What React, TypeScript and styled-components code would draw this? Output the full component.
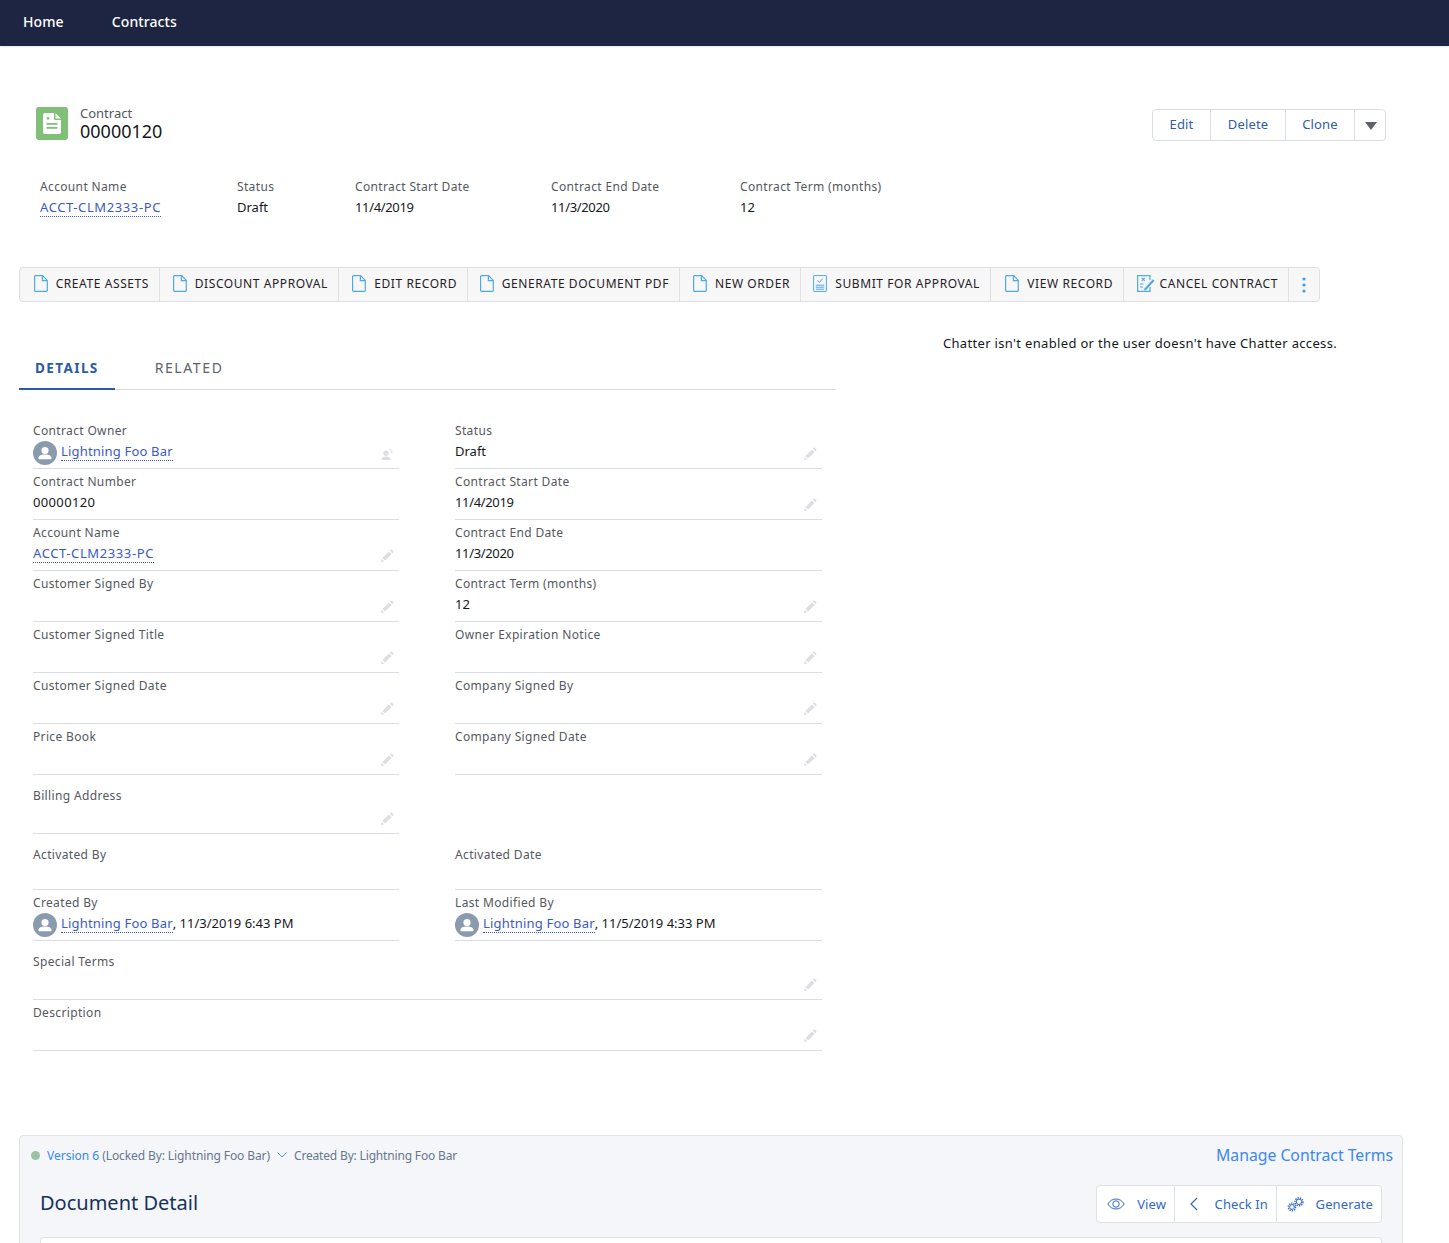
import React from "react";
import styled, { createGlobalStyle } from "styled-components";

const Global = createGlobalStyle`
  html, body { margin: 0; padding: 0; height: 1243px; overflow: hidden; background: #fff; }
  body { font-family: "Noto Sans", "Open Sans", sans-serif; color: #16325c; }
  * { box-sizing: border-box; }
`;

const Page = styled.div`
  width: 1449px;
  height: 1243px;
  overflow: hidden;
`;
const Nav = styled.nav`
  height: 46px;
  background: #1d2542;
  display: flex;
  align-items: center;
  padding: 0 23px 3px;
  gap: 48px;
  box-shadow: 0 1px 2px rgba(0, 0, 0, 0.1);
`;
const NavItem = styled.a`
  color: #fff;
  font-size: 14px;
  font-weight: 500;
  letter-spacing: 0.1px;
`;
const Highlights = styled.header`
  padding: 60px 63px 0 36px;
  height: 221px;
`;
const TitleRow = styled.div`
  display: flex;
  justify-content: space-between;
  align-items: flex-start;
`;
const TitleBlock = styled.div`
  display: flex;
  gap: 12px;
  align-items: flex-start;
`;
const TitleIcon = styled.span`
  width: 32px;
  height: 33px;
  margin-top: 1px;
  border-radius: 3px;
  background: #7fbf76;
  display: flex;
  align-items: center;
  justify-content: center;
`;
const TitleText = styled.div`
  display: flex;
  flex-direction: column;
  margin-top: -1px;
`;
const Eyebrow = styled.span`
  font-size: 13px;
  line-height: 16px;
  color: #54585e;
`;
const RecordNumber = styled.span`
  font-size: 18px;
  line-height: 20px;
  color: #16181c;
`;
const ButtonGroup = styled.div`
  display: flex;
  background: #fff;
  border: 1px solid #d8dde6;
  border-radius: 4px;
  margin-top: 3px;
  height: 32px;
`;
const GroupButton = styled.button<{ $w: number }>`
  width: ${(p) => p.$w}px;
  border: 0;
  background: none;
  padding: 0 0 2px;
  font: inherit;
  font-size: 13px;
  letter-spacing: 0.15px;
  color: #2f5da8;
  display: flex;
  align-items: center;
  justify-content: center;
  & + & {
    border-left: 1px solid #d8dde6;
  }
`;
const Caret = styled.span`
  display: flex;
  margin: 4px 0 0 2px;
`;
const Facts = styled.div`
  display: flex;
  margin-top: 38px;
  padding-left: 4px;
`;
const Fact = styled.div<{ $w: number }>`
  width: ${(p) => p.$w}px;
  display: flex;
  flex-direction: column;
`;
const FactLabel = styled.span`
  font-size: 12px;
  line-height: 16px;
  letter-spacing: 0.35px;
  color: #54585e;
  white-space: nowrap;
`;
const FactValue = styled.span<{ $ls?: number }>`
  display: flex;
  align-items: flex-end;
  font-size: 13px;
  line-height: 20px;
  height: 20px;
  margin-top: 2px;
  letter-spacing: ${(p) => p.$ls ?? 0}px;
  color: #16181c;
`;
const RecordLink = styled.a<{ $ls: number }>`
  color: #3b59c6;
  border-bottom: 1px dotted #3b59c6;
  line-height: 18px;
  letter-spacing: ${(p) => p.$ls}px;
  display: inline-block;
`;
const ActionsWrap = styled.div`
  padding-left: 19px;
`;
const Actions = styled.div`
  display: inline-flex;
  height: 35px;
  background: #f7f7f7;
  border: 1px solid #dddfe3;
  border-radius: 4px;
`;
const Action = styled.div<{ $w: number; $gap?: number }>`
  width: ${(p) => p.$w}px;
  display: flex;
  align-items: center;
  justify-content: flex-end;
  padding: 0 10px 2px 0;
  gap: ${(p) => p.$gap ?? 8}px;
  font-size: 12px;
  letter-spacing: 0.58px;
  color: #1f2126;
  white-space: nowrap;
  border-right: 1px solid #dddfe3;
  &:last-child {
    border-right: 0;
    justify-content: center;
    padding: 0;
  }
`;
const Main = styled.div`
  display: flex;
  padding-left: 19px;
  margin-top: 26px;
`;
const LeftPane = styled.section`
  width: 817px;
`;
const Tabs = styled.div`
  height: 37px;
  margin-top: 25px;
  display: flex;
  border-bottom: 1px solid #d8dde6;
  align-items: stretch;
`;
const Tab = styled.div<{ $active?: boolean }>`
  height: 37px;
  padding: 0 16px;
  margin-right: ${(p) => (p.$active ? 24 : 0)}px;
  font-size: ${(p) => (p.$active ? 13.5 : 14)}px;
  line-height: 30px;
  letter-spacing: ${(p) => (p.$active ? 1.4 : 1.6)}px;
  font-weight: ${(p) => (p.$active ? 700 : 400)};
  color: ${(p) => (p.$active ? "#2a5ba8" : "#5d6168")};
  border-bottom: ${(p) => (p.$active ? "2px solid #2a5ba8" : "0")};
`;
const ChatterNote = styled.p`
  margin: 0 0 0 104px;
  width: 400px;
  display: flex;
  justify-content: center;
  font-size: 13px;
  line-height: 20px;
  letter-spacing: 0.33px;
  color: #16181c;
  white-space: nowrap;
  padding-top: 5px;
`;
const FieldGrid = styled.div`
  width: 789px;
  margin: 28px 0 0 14px;
  display: grid;
  grid-template-columns: 366px 367px;
  column-gap: 56px;
`;
const Field = styled.div<{ $h?: number; $wide?: boolean }>`
  position: relative;
  height: ${(p) => p.$h ?? 51}px;
  padding-top: ${(p) => (p.$h ? 13 : 5)}px;
  border-bottom: 1px solid #d8dde6;
  grid-column: ${(p) => (p.$wide ? "1 / span 2" : "auto")};
  display: flex;
  flex-direction: column;
`;
const Spacer = styled.div<{ $h: number }>`
  height: ${(p) => p.$h}px;
`;
const FieldLabel = styled.span`
  font-size: 12px;
  line-height: 16px;
  letter-spacing: 0.35px;
  color: #54585e;
`;
const FieldValue = styled.span<{ $ls?: number }>`
  font-size: 13px;
  line-height: 20px;
  height: 20px;
  margin-top: 2px;
  letter-spacing: ${(p) => p.$ls ?? 0}px;
  color: #16181c;
  display: flex;
  align-items: center;
  white-space: pre;
`;
const Avatar = styled.span`
  width: 24px;
  height: 24px;
  margin: 3px 4px 0 0;
  display: inline-flex;
  flex: none;
`;
const EditSlot = styled.span`
  position: absolute;
  right: 5px;
  bottom: 7px;
  width: 14px;
  height: 14px;
  display: flex;
`;
const Panel = styled.section`
  margin: 84px 0 0 19px;
  width: 1384px;
  height: 300px;
  background: #f4f6f9;
  border: 1px solid #dfe3ea;
  border-radius: 4px;
  padding: 0 9px 0 11px;
`;
const PanelTop = styled.div`
  height: 38px;
  display: flex;
  align-items: center;
  justify-content: space-between;
`;
const VersionLine = styled.div`
  display: flex;
  align-items: center;
  font-size: 12px;
  letter-spacing: -0.1px;
  color: #67778f;
  white-space: pre;
`;
const Dot = styled.span`
  width: 9px;
  height: 9px;
  border-radius: 50%;
  background: #9cc2a6;
  margin-right: 7px;
`;
const VersionLink = styled.span`
  color: #3a87f2;
  letter-spacing: 0;
`;
const CreatedBy = styled.span`
  letter-spacing: -0.17px;
`;
const Chevron = styled.span`
  display: inline-flex;
  margin: 0 7px 0 7px;
`;
const ManageLink = styled.a`
  color: #3a87f2;
  font-size: 15.75px;
`;
const DocHeader = styled.div`
  display: flex;
  justify-content: space-between;
  align-items: center;
  padding: 0 11px 0 9px;
  height: 60px;
`;
const DocTitle = styled.h2`
  margin: -3px 0 0;
  font-size: 20px;
  font-weight: 400;
  color: #16325c;
`;
const DocButtons = styled.div`
  display: flex;
  height: 38px;
  background: #fff;
  border: 1px solid #dde1e8;
  border-radius: 4px;
`;
const DocButton = styled.button<{ $w: number }>`
  width: ${(p) => p.$w}px;
  background: none;
  border: 0;
  padding: 0 8px 0 0;
  font: inherit;
  font-size: 13px;
  letter-spacing: 0.1px;
  color: #2f68c8;
  display: flex;
  align-items: center;
  justify-content: flex-end;
  gap: 12px;
  & + & {
    border-left: 1px solid #dde1e8;
  }
`;
const InnerCard = styled.div`
  margin: 3px 11px 0 9px;
  height: 200px;
  background: #fff;
  border: 1px solid #dde1e8;
  border-radius: 4px;
`;

const DocIcon = () => (
  <svg width="14" height="17" viewBox="0 0 14 17" fill="none" stroke="#4ea9e6" strokeWidth="1.2">
    <path d="M1.400 .7h7.200l4.700 4.700v10.100a.8.8 0 0 1-.8.8H1.400a.8.8 0 0 1-.8-.8V1.500a.8.8 0 0 1 .8-.8zM8.400 .9v4.700h4.700" />
  </svg>
);
const SubmitIcon = () => (
  <svg width="14" height="17" viewBox="0 0 14 17" fill="none" stroke="#4ea9e6" strokeWidth="1">
    <rect x=".6" y=".6" width="12.800" height="15.800" rx=".5" />
    <path d="M4.500 5.500l1.800 2 3.400-4M2.800 10.200h8.400M2.800 12.200h8.400M2.800 14.200h8.400" />
  </svg>
);
const CancelIcon = () => (
  <svg width="18" height="17" viewBox="0 0 18 17" fill="none" stroke="#4ea9e6" strokeWidth="1.2">
    <path d="M13 5V.6H.6v15.800H13V12" />
    <path d="M4.800 2.800l3 3M7.800 2.800l-3 3M3 9h3.500M3 12h3" />
    <path d="M7.500 13.500l-.4 2 2-.6 8.400-9.200-1.600-1.400z" fill="#4ea9e6" stroke="none" />
  </svg>
);
const Pencil = () => (
  <svg width="14" height="14" viewBox="0 0 14 14" fill="#dcdee2">
    <path d="M1 13l.6-3.200 2.600 2.600zM2.400 9L9 2.400 11.600 5 5 11.600zM9.800 1.600l.8-.8a1 1 0 0 1 1.400 0l1.200 1.200a1 1 0 0 1 0 1.400l-.8.8z" />
  </svg>
);
const OwnerChange = () => (
  <svg width="14" height="14" viewBox="0 0 14 14" fill="#dcdee2">
    <circle cx="6" cy="6.200" r="2.600" />
    <path d="M1.500 13c0-2.400 2-3.400 4.500-3.400s4.500 1 4.500 3.400zM9 1.500c1.600.2 2.800 1.400 3 3l1-.4-1.200 2.200-1.400-1.600 1 0C11.200 3.500 10.200 2.700 9 2.500z" />
  </svg>
);
const UserAvatar = () => (
  <svg width="24" height="24" viewBox="0 0 24 24">
    <circle cx="12" cy="12" r="12" fill="#8a9bae" />
    <circle cx="12" cy="9.500" r="3.600" fill="#fff" />
    <path d="M5.500 17.200c0-2.600 2.600-3.700 6.500-3.700s6.500 1.100 6.500 3.700c0 .6-.4 1-1 1h-11c-.6 0-1-.4-1-1z" fill="#fff" />
  </svg>
);
const Gears = () => (
  <svg width="17" height="15" viewBox="0 0 17 15" fill="none" stroke="#2f68c8">
    <circle cx="5" cy="10" r="3.700" strokeWidth="1.400" strokeDasharray="1.300 1" />
    <circle cx="5" cy="10" r="2.400" strokeWidth="1" />
    <circle cx="12" cy="4.800" r="4" strokeWidth="1.400" strokeDasharray="1.400 1" />
    <circle cx="12" cy="4.800" r="2.700" strokeWidth="1" />
  </svg>
);

type F = {
  label: string;
  value?: string;
  ls?: number;
  link?: string;
  linkLs?: number;
  avatar?: boolean;
  suffix?: string;
  edit?: "pencil" | "owner";
  h?: number;
  wide?: boolean;
};

const FieldItem = ({ label, value, ls, link, linkLs, avatar, suffix, edit, h, wide }: F) => (
  <Field $h={h} $wide={wide}>
    <FieldLabel>{label}</FieldLabel>
    <FieldValue $ls={ls}>
      {avatar && (
        <Avatar>
          <UserAvatar />
        </Avatar>
      )}
      {link && <RecordLink $ls={linkLs ?? 0.18}>{link}</RecordLink>}
      {suffix}
      {value}
    </FieldValue>
    {edit && <EditSlot>{edit === "owner" ? <OwnerChange /> : <Pencil />}</EditSlot>}
  </Field>
);

const actions: { t: string; w: number; gap?: number; icon: React.ReactNode }[] = [
  { t: "CREATE ASSETS", w: 140, icon: <DocIcon /> },
  { t: "DISCOUNT APPROVAL", w: 179, icon: <DocIcon /> },
  { t: "EDIT RECORD", w: 129, icon: <DocIcon /> },
  { t: "GENERATE DOCUMENT PDF", w: 212, icon: <DocIcon /> },
  { t: "NEW ORDER", w: 121, icon: <DocIcon /> },
  { t: "SUBMIT FOR APPROVAL", w: 190, icon: <SubmitIcon /> },
  { t: "VIEW RECORD", w: 133, icon: <DocIcon /> },
  { t: "CANCEL CONTRACT", w: 165, gap: 5, icon: <CancelIcon /> },
];

const fieldsTop: F[] = [
  { label: "Contract Owner", link: "Lightning Foo Bar", avatar: true, edit: "owner" },
  { label: "Status", value: "Draft", edit: "pencil" },
  { label: "Contract Number", value: "00000120", ls: 0.35 },
  { label: "Contract Start Date", value: "11/4/2019", ls: -0.35, edit: "pencil" },
  { label: "Account Name", link: "ACCT-CLM2333-PC", linkLs: 0.6, edit: "pencil" },
  { label: "Contract End Date", value: "11/3/2020", ls: -0.35 },
  { label: "Customer Signed By", edit: "pencil" },
  { label: "Contract Term (months)", value: "12", edit: "pencil" },
  { label: "Customer Signed Title", edit: "pencil" },
  { label: "Owner Expiration Notice", edit: "pencil" },
  { label: "Customer Signed Date", edit: "pencil" },
  { label: "Company Signed By", edit: "pencil" },
  { label: "Price Book", edit: "pencil" },
  { label: "Company Signed Date", edit: "pencil" },
];

export default function App() {
  return (
    <Page>
      <Global />
      <Nav>
        <NavItem>Home</NavItem>
        <NavItem>Contracts</NavItem>
      </Nav>
      <Highlights>
        <TitleRow>
          <TitleBlock>
            <TitleIcon>
              <svg width="18" height="21" viewBox="0 0 18 21" fill="#fff">
                <path fillRule="evenodd" d="M2 0h9v5.500c0 .8.700 1.500 1.500 1.500H18v12a2 2 0 0 1-2 2H2a2 2 0 0 1-2-2V2a2 2 0 0 1 2-2zM3.500 10v1.800h11V10zM3.500 14v1.800h11V14zM5 3l-.6 1.500-1.500.1 1.200 1-.4 1.500L5 6.300l1.300.8-.4-1.500 1.200-1-1.500-.1z" />
                <path d="M12.500 0L18 5.500h-4.800a.7.7 0 0 1-.7-.7z" />
              </svg>
            </TitleIcon>
            <TitleText>
              <Eyebrow>Contract</Eyebrow>
              <RecordNumber>00000120</RecordNumber>
            </TitleText>
          </TitleBlock>
          <ButtonGroup>
            <GroupButton $w={57}>Edit</GroupButton>
            <GroupButton $w={75}>Delete</GroupButton>
            <GroupButton $w={69}>Clone</GroupButton>
            <GroupButton $w={31}>
              <Caret>
                <svg width="12" height="8" viewBox="0 0 12 8">
                  <path d="M0 0h12L6 8z" fill="#5e6167" />
                </svg>
              </Caret>
            </GroupButton>
          </ButtonGroup>
        </TitleRow>
        <Facts>
          <Fact $w={197}>
            <FactLabel>Account Name</FactLabel>
            <FactValue>
              <RecordLink $ls={0.6}>ACCT-CLM2333-PC</RecordLink>
            </FactValue>
          </Fact>
          <Fact $w={118}>
            <FactLabel>Status</FactLabel>
            <FactValue>Draft</FactValue>
          </Fact>
          <Fact $w={196}>
            <FactLabel>Contract Start Date</FactLabel>
            <FactValue $ls={-0.35}>11/4/2019</FactValue>
          </Fact>
          <Fact $w={189}>
            <FactLabel>Contract End Date</FactLabel>
            <FactValue $ls={-0.35}>11/3/2020</FactValue>
          </Fact>
          <Fact $w={160}>
            <FactLabel>Contract Term (months)</FactLabel>
            <FactValue>12</FactValue>
          </Fact>
        </Facts>
      </Highlights>
      <ActionsWrap>
        <Actions>
          {actions.map((a) => (
            <Action key={a.t} $w={a.w} $gap={a.gap}>
              {a.icon}
              <span>{a.t}</span>
            </Action>
          ))}
          <Action $w={30}>
            <svg width="4" height="16" viewBox="0 0 4 16" fill="#3f9fe0">
              <circle cx="2" cy="2" r="1.600" />
              <circle cx="2" cy="8" r="1.600" />
              <circle cx="2" cy="14" r="1.600" />
            </svg>
          </Action>
        </Actions>
      </ActionsWrap>
      <Main>
        <LeftPane>
          <Tabs>
            <Tab $active>DETAILS</Tab>
            <Tab>RELATED</Tab>
          </Tabs>
          <FieldGrid>
            {fieldsTop.map((f) => (
              <FieldItem key={f.label} {...f} />
            ))}
            <FieldItem label="Billing Address" edit="pencil" h={59} />
            <Spacer $h={59} />
            <FieldItem label="Activated By" h={56} />
            <FieldItem label="Activated Date" h={56} />
            <FieldItem label="Created By" link="Lightning Foo Bar" suffix=", 11/3/2019 6:43 PM" avatar />
            <FieldItem label="Last Modified By" link="Lightning Foo Bar" suffix=", 11/5/2019 4:33 PM" avatar />
            <FieldItem label="Special Terms" edit="pencil" h={59} wide />
            <FieldItem label="Description" edit="pencil" wide />
          </FieldGrid>
        </LeftPane>
        <ChatterNote>Chatter isn't enabled or the user doesn't have Chatter access.</ChatterNote>
      </Main>
      <Panel>
        <PanelTop>
          <VersionLine>
            <Dot />
            <VersionLink>Version 6</VersionLink> (Locked By: Lightning Foo Bar)
            <Chevron>
              <svg width="10" height="6" viewBox="0 0 10 6" fill="none" stroke="#4a8fe8" strokeWidth="1">
                <path d="M.5.500L5 5l4.500-4.500" />
              </svg>
            </Chevron>
            <CreatedBy>Created By: Lightning Foo Bar</CreatedBy>
          </VersionLine>
          <ManageLink>Manage Contract Terms</ManageLink>
        </PanelTop>
        <DocHeader>
          <DocTitle>Document Detail</DocTitle>
          <DocButtons>
            <DocButton $w={77}>
              <svg width="18" height="12" viewBox="0 0 18 12" fill="none" stroke="#2f68c8" strokeWidth="1">
                <path d="M.8 6C3 2.600 5.800 1 9 1s6 1.600 8.200 5C15 9.400 12.200 11 9 11S3 9.400.8 6z" />
                <circle cx="9" cy="6" r="3.200" />
              </svg>
              View
            </DocButton>
            <DocButton $w={102}>
              <svg width="16" height="14" viewBox="0 0 16 14" fill="none" stroke="#2f68c8" strokeWidth="1.200">
                <path d="M10 1L4 7l6 6" />
              </svg>
              Check In
            </DocButton>
            <DocButton $w={105}>
              <Gears />
              Generate
            </DocButton>
          </DocButtons>
        </DocHeader>
        <InnerCard />
      </Panel>
    </Page>
  );
}
